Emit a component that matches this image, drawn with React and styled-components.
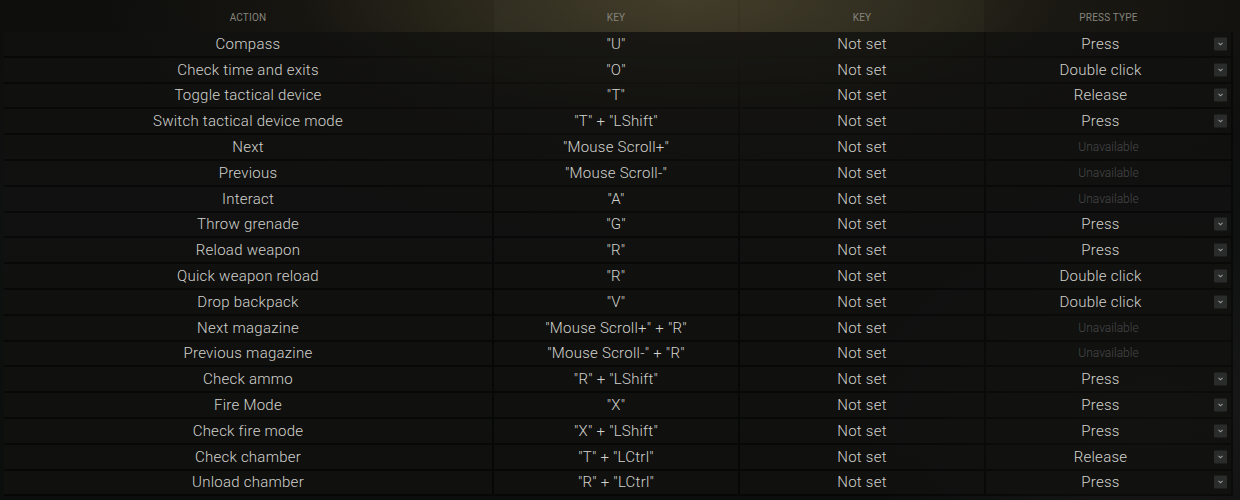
import React from 'react';
import styled, { createGlobalStyle } from 'styled-components';

const GlobalStyle = createGlobalStyle`
  html, body {
    margin: 0;
    padding: 0;
    background: #0d0e0e;
  }
  body {
    font-family: Roboto, "Noto Sans", sans-serif;
  }
`;

// key bindings shown in the table
const bindings = [
  { action: 'Compass', key: '"U"', press: 'Press' },
  { action: 'Check time and exits', key: '"O"', press: 'Double click' },
  { action: 'Toggle tactical device', key: '"T"', press: 'Release' },
  { action: 'Switch tactical device mode', key: '"T" + "LShift"', press: 'Press' },
  { action: 'Next', key: '"Mouse Scroll+"', press: null },
  { action: 'Previous', key: '"Mouse Scroll-"', press: null },
  { action: 'Interact', key: '"A"', press: null },
  { action: 'Throw grenade', key: '"G"', press: 'Press' },
  { action: 'Reload weapon', key: '"R"', press: 'Press' },
  { action: 'Quick weapon reload', key: '"R"', press: 'Double click' },
  { action: 'Drop backpack', key: '"V"', press: 'Double click' },
  { action: 'Next magazine', key: '"Mouse Scroll+" + "R"', press: null },
  { action: 'Previous magazine', key: '"Mouse Scroll-" + "R"', press: null },
  { action: 'Check ammo', key: '"R" + "LShift"', press: 'Press' },
  { action: 'Fire Mode', key: '"X"', press: 'Press' },
  { action: 'Check fire mode', key: '"X" + "LShift"', press: 'Press' },
  { action: 'Check chamber', key: '"T" + "LCtrl"', press: 'Release' },
  { action: 'Unload chamber', key: '"R" + "LCtrl"', press: 'Press' },
];

const Screen = styled.div`
  width: 1240px;
  height: 500px;
  overflow: hidden;
  background:
    radial-gradient(ellipse 380px 110px at 680px 0px, rgba(70, 64, 42, 0.75), rgba(70, 64, 42, 0) 100%),
    radial-gradient(ellipse 620px 240px at 720px 0px, rgba(46, 42, 28, 0.8), rgba(30, 28, 20, 0) 100%),
    radial-gradient(ellipse 300px 200px at 1150px 420px, rgba(40, 40, 38, 0.45), rgba(30, 30, 30, 0) 100%),
    linear-gradient(180deg, #0e0e0c 0%, #0f1010 40%, #0c0d0d 100%);
`;

const HeaderRow = styled.div`
  display: grid;
  grid-template-columns: 488px 244px 244px 245px;
  column-gap: 2px;
  margin-left: 4px;
  width: 1229px;
  height: 32px;
`;

const HeaderCell = styled.div`
  display: flex;
  align-items: center;
  justify-content: center;
  padding-top: 2px;
  font-size: 10px;
  letter-spacing: 0.2px;
  text-transform: uppercase;
  color: #85847c;
  background: ${p => (p.$tint ? 'rgba(255, 250, 220, 0.025)' : 'transparent')};
`;

const Body = styled.div`
  display: flex;
  flex-direction: column;
  gap: 2px;
  background: rgba(4, 4, 4, 0.55);
  margin-left: 4px;
  width: 1229px;
  padding-bottom: 2px;
`;

const Row = styled.div`
  display: grid;
  grid-template-columns: 488px 244px 244px 245px;
  column-gap: 2px;
  height: 23.8px;
`;

const Cell = styled.div`
  position: relative;
  display: flex;
  align-items: center;
  justify-content: center;
  padding-right: ${p => (p.$select ? '16px' : '0')};
  background: rgba(24, 24, 22, 0.55);
  font-size: ${p => (p.$muted ? '12px' : '15px')};
  font-weight: 300;
  letter-spacing: ${p => (p.$muted ? '0' : '0.25px')};
  color: ${p => (p.$muted ? '#474848' : '#d2d2cd')};
  white-space: nowrap;
`;

const Dropdown = styled.span`
  position: absolute;
  right: 4px;
  top: 50%;
  transform: translateY(-50%);
  width: 13px;
  height: 13px;
  border-radius: 1px;
  background: #2a2b2b;
  display: flex;
  align-items: center;
  justify-content: center;
`;

function Chevron() {
  return (
    <svg width="7" height="5" viewBox="0 0 7 5">
      <path d="M1.5 1.3 L3.5 3.3 L5.5 1.3" fill="none" stroke="#9a9a98" strokeWidth="1.1" />
    </svg>
  );
}

export default function App() {
  return (
    <Screen>
      <GlobalStyle />
      <HeaderRow>
        <HeaderCell>Action</HeaderCell>
        <HeaderCell $tint>Key</HeaderCell>
        <HeaderCell $tint>Key</HeaderCell>
        <HeaderCell>Press type</HeaderCell>
      </HeaderRow>
      <Body>
        {bindings.map(b => (
          <Row key={b.action}>
            <Cell>{b.action}</Cell>
            <Cell>{b.key}</Cell>
            <Cell>Not set</Cell>
            {b.press ? (
              <Cell $select>
                {b.press}
                <Dropdown>
                  <Chevron />
                </Dropdown>
              </Cell>
            ) : (
              <Cell $muted>Unavailable</Cell>
            )}
          </Row>
        ))}
      </Body>
    </Screen>
  );
}
